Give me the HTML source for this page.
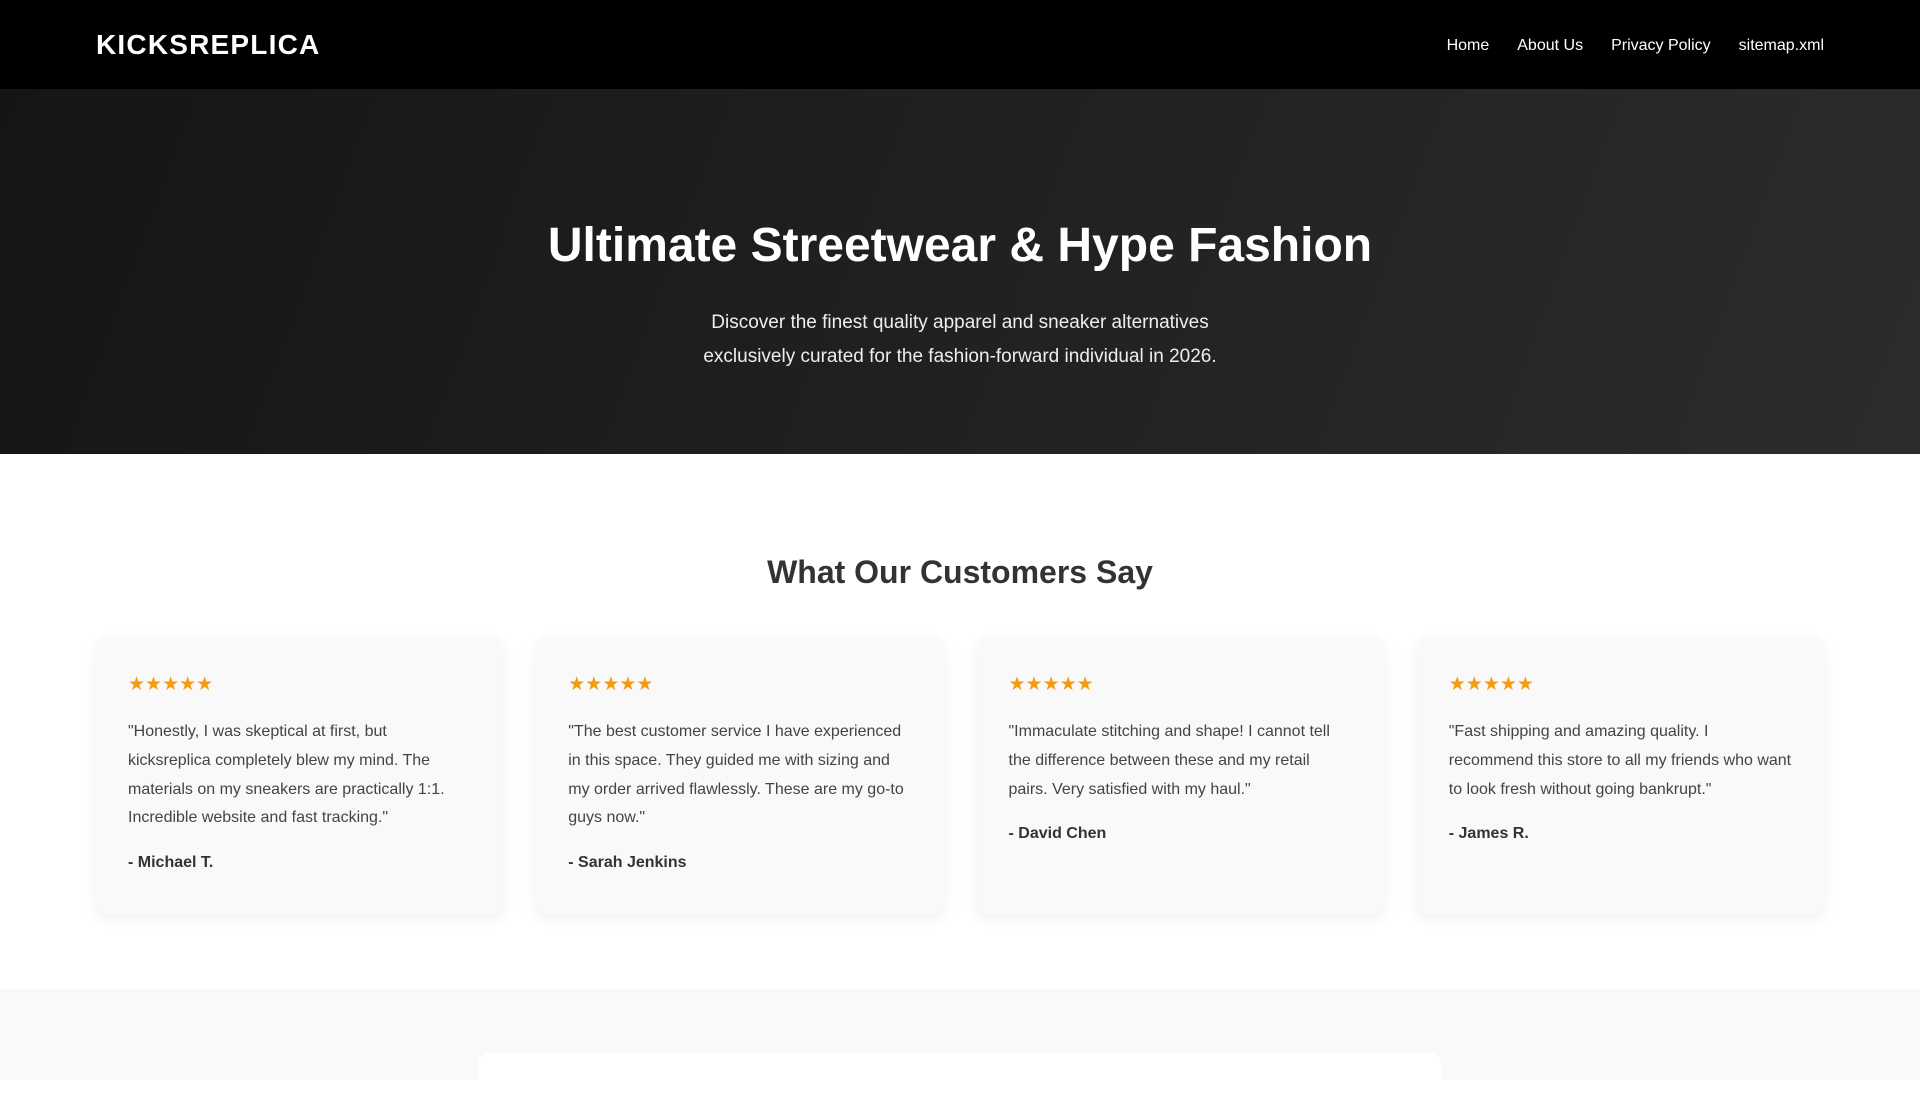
<!DOCTYPE html>
<html><head><meta charset="utf-8"><style>
*{margin:0;padding:0;box-sizing:border-box}
body{width:1920px;height:1080px;overflow:hidden;font-family:"Liberation Sans",Arial,sans-serif;background:#fff;color:#333}
nav{height:89px;background:#000;display:flex;align-items:center;justify-content:space-between;padding:0 96px}
.logo{color:#fff;font-weight:bold;font-size:28px;letter-spacing:1.2px}
.links a{color:#fff;text-decoration:none;font-size:16px;margin-left:28px;position:relative;top:1px}
.hero{height:365px;background:linear-gradient(110deg,#151515 0%,#2c2c2c 100%);text-align:center;color:#fff;padding-top:129px}
.hero h1{font-size:48px;line-height:56px}
.hero p{font-size:19px;line-height:34px;margin-top:32px;color:#eee}
h2{text-align:center;font-size:32px;margin-top:98px;color:#333;line-height:40px}
.cards{display:flex;gap:33px;padding:0 96px;margin-top:44px}
.card{flex:1;height:278px;background:#f9f9f9;border-radius:12px;box-shadow:0 5px 15px rgba(0,0,0,0.06);padding:37px 32px}
.stars{color:#f39c12;font-size:19px;line-height:24px}
.card p{font-size:16px;line-height:28.8px;margin-top:21px;color:#444}
.card b{display:block;font-size:16px;margin-top:21px;color:#333}
.gray{position:absolute;top:989px;left:0;width:1920px;height:91px;background:#f9f9f9}
.box{position:absolute;top:1053px;left:478px;width:963px;height:60px;background:#fff;border-radius:12px}
</style></head><body>
<nav><div class="logo">KICKSREPLICA</div><div class="links"><a>Home</a><a>About Us</a><a>Privacy Policy</a><a>sitemap.xml</a></div></nav>
<div class="hero"><h1>Ultimate Streetwear &amp; Hype Fashion</h1><p>Discover the finest quality apparel and sneaker alternatives<br>exclusively curated for the fashion-forward individual in 2026.</p></div>
<h2>What Our Customers Say</h2>
<div class="cards">
<div class="card"><div class="stars">★★★★★</div><p>"Honestly, I was skeptical at first, but kicksreplica completely blew my mind. The materials on my sneakers are practically 1:1. Incredible website and fast tracking."</p><b>- Michael T.</b></div>
<div class="card"><div class="stars">★★★★★</div><p>"The best customer service I have experienced in this space. They guided me with sizing and my order arrived flawlessly. These are my go-to guys now."</p><b>- Sarah Jenkins</b></div>
<div class="card"><div class="stars">★★★★★</div><p>"Immaculate stitching and shape! I cannot tell the difference between these and my retail pairs. Very satisfied with my haul."</p><b>- David Chen</b></div>
<div class="card"><div class="stars">★★★★★</div><p>"Fast shipping and amazing quality. I recommend this store to all my friends who want to look fresh without going bankrupt."</p><b>- James R.</b></div>
</div>
<div class="gray"></div><div class="box"></div>
</body></html>
